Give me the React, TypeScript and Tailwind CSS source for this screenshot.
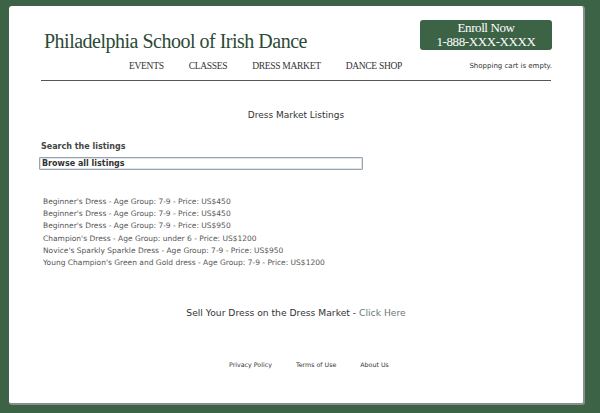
import React from "react";

const listings = [
  "Beginner's Dress - Age Group: 7-9 - Price: US$450",
  "Beginner's Dress - Age Group: 7-9 - Price: US$450",
  "Beginner's Dress - Age Group: 7-9 - Price: US$950",
  "Champion's Dress - Age Group: under 6 - Price: US$1200",
  "Novice's Sparkly Sparkle Dress - Age Group: 7-9 - Price: US$950",
  "Young Champion's Green and Gold dress - Age Group: 7-9 - Price: US$1200",
];

export default function App() {
  return (
    <div className="w-[600px] h-[413px] bg-[#3d6347] pt-[6px] pl-[9px] overflow-hidden">
      <div className="w-[576px] h-[399px] bg-white rounded-[3px] border-r-2 border-b-2 border-[#8a8f8c] flex flex-col px-[32px]">
        {/* header */}
        <div className="flex justify-between items-start pt-[14px]">
          <div
            className="mt-[9px] ml-[3px] text-[20px] leading-[24px] text-[#2c4a36] tracking-[-0.5px]"
            style={{ fontFamily: '"Liberation Serif", serif' }}
          >
            Philadelphia School of Irish Dance
          </div>
          <div
            className="w-[132px] h-[30px] -mr-[1px] bg-[#3d6347] rounded-[3px] flex flex-col items-center justify-center text-white text-[13px] leading-[14px] tracking-[-0.4px]"
            style={{ fontFamily: '"Liberation Serif", serif' }}
          >
            <span>Enroll Now</span>
            <span>1-888-XXX-XXXX</span>
          </div>
        </div>
        {/* nav */}
        <div className="flex items-center justify-between mt-[7px] h-[12px]">
          <div
            className="flex gap-[25px] pl-[88px] text-[9.5px] text-[#333] tracking-[-0.3px]"
            style={{ fontFamily: '"Liberation Serif", serif' }}
          >
            <span>EVENTS</span>
            <span>CLASSES</span>
            <span>DRESS MARKET</span>
            <span>DANCE SHOP</span>
          </div>
          <div
            className="text-[7px] text-[#333] -mr-[1px]"
            style={{ fontFamily: '"DejaVu Sans", sans-serif' }}
          >
            Shopping cart is empty.
          </div>
        </div>
        <div className="h-px bg-[#555] mt-[8px]" />

        <div
          className="flex flex-col"
          style={{ fontFamily: '"DejaVu Sans", sans-serif' }}
        >
          <div className="text-center text-[9px] text-[#333] mt-[28px] leading-[12px]">
            Dress Market Listings
          </div>
          <div className="text-[8px] font-bold text-[#444] mt-[20px] leading-[12px]">
            Search the listings
          </div>
          <div className="mt-[4px] -ml-[2px] w-[324px] h-[13px] border border-[#9aa3ad] rounded-[1px] shadow-[inset_0_0_0_1px_#dde3ea] flex items-center pl-[2px] text-[8px] font-bold text-[#333] leading-[11px]">
            Browse all listings
          </div>
          <div className="mt-[26px] ml-[2px] flex flex-col text-[7.5px] text-[#555] leading-[12.2px]">
            {listings.map((l, i) => (
              <span key={i}>{l}</span>
            ))}
          </div>
          <div className="text-center text-[9.2px] text-[#333] mt-[37px] leading-[14px]">
            Sell Your Dress on the Dress Market -{" "}
            <span className="text-[#6b7a72]">Click Here</span>
          </div>
          <div className="flex gap-[24px] ml-[188px] mt-[40px] text-[6.3px] text-[#333] leading-[10px]">
            <span>Privacy Policy</span>
            <span>Terms of Use</span>
            <span>About Us</span>
          </div>
        </div>
      </div>
    </div>
  );
}
